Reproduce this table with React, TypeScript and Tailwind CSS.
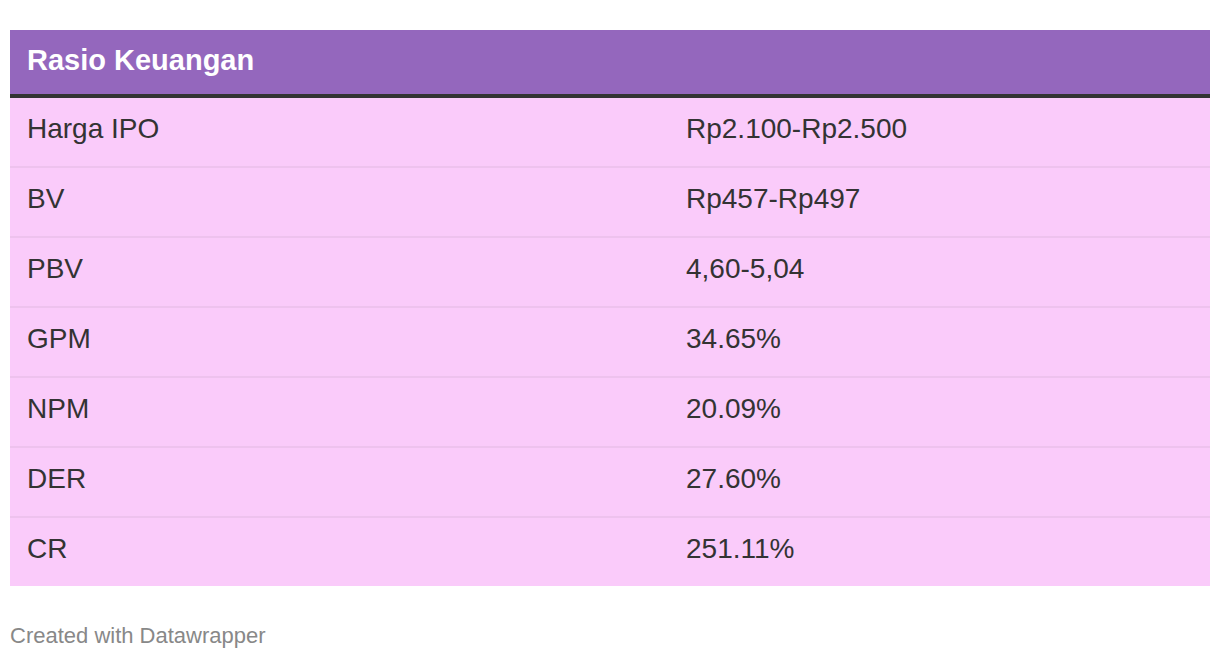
const rows = [
  ["Harga IPO", "Rp2.100-Rp2.500"],
  ["BV", "Rp457-Rp497"],
  ["PBV", "4,60-5,04"],
  ["GPM", "34.65%"],
  ["NPM", "20.09%"],
  ["DER", "27.60%"],
  ["CR", "251.11%"],
];

export default function App() {
  return (
    <div className="min-h-[658px] bg-white px-[10px] pt-[30px] font-['Liberation_Sans',Arial,sans-serif]">
      <div className="w-[1200px]">
        {/* header */}
        <div className="flex h-[68px] items-center border-b-4 border-[#333333] bg-[#9467bd] px-[17px] pb-[2px]">
          <h1 className="text-[29px] font-bold text-white">Rasio Keuangan</h1>
        </div>
        {/* rows */}
        <div className="bg-[#facbfa]">
          {rows.map(([label, value], i) => (
            <div
              key={label}
              className={`flex items-center pb-[6px] text-[28px] text-[#333333] ${
                i < rows.length - 1 ? "h-[70px] border-b-2 border-[#eec2ee]" : "h-[68px]"
              }`}
            >
              <div className="w-[660px] pl-[17px]">{label}</div>
              <div className="flex-1 pl-[16px]">{value}</div>
            </div>
          ))}
        </div>
        <p className="mt-[39px] text-[22px] leading-none text-[#888888]">Created with Datawrapper</p>
      </div>
    </div>
  );
}
